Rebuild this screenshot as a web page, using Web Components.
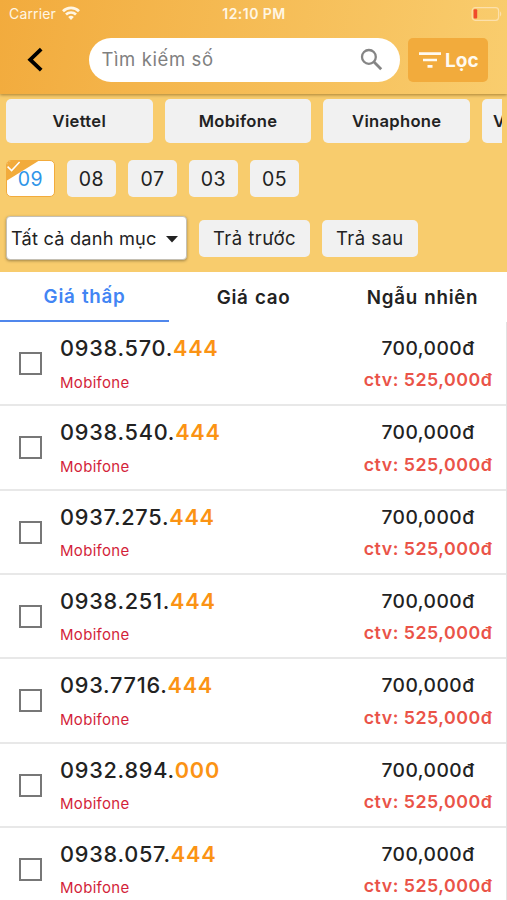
<!DOCTYPE html>
<html lang="vi">
<head>
<meta charset="utf-8">
<title>Sim</title>
<style>
  body {
    margin: 0;
    width: 507px;
    height: 900px;
    overflow: hidden;
    background: #fff;
    color: #222;
    font-family: Inter, "Liberation Sans", sans-serif;
  }
</style>
</head>
<body>
<sim-app></sim-app>

<script>
const define = (name, html, setup) => {
  const template = document.createElement('template')
  template.innerHTML = html

  customElements.define(name, class extends HTMLElement {
    constructor() {
      super()
      this.attachShadow({ mode: 'open' }).appendChild(template.content.cloneNode(true))
    }

    connectedCallback() {
      if (setup) setup(this, this.shadowRoot)
    }
  })
}

define('status-bar', `
  <style>
    :host {
      display: grid;
      grid-template-columns: 1fr auto 1fr;
      align-items: center;
      height: 28px;
      padding: 0 8px 0 9px;
      color: #fff6e4;
      font-size: 14px;
      line-height: 28px;
    }
    .left { display: flex; align-items: center; gap: 6px; letter-spacing: .15px; }
    .time { font-size: 14px; font-weight: 600; letter-spacing: .45px; }
    .battery { justify-self: end; margin-right: -8px; }
    svg { display: block; }
    .left svg { margin-top: -2px; }
  </style>
  <span class="left">Carrier
    <svg width="18" height="14" viewBox="0 0 18 14" fill="none" stroke="#fff6e4" stroke-width="2.7">
      <path d="M1 5.2a11.4 11.4 0 0 1 16 0M4 8.5a7.2 7.2 0 0 1 10 0"/>
      <path d="M9 14 6.2 11.1a4 4 0 0 1 5.6 0z" fill="#fff6e4" stroke="none"/>
    </svg>
  </span>
  <span class="time">12:10 PM</span>
  <svg class="battery" width="36" height="14" viewBox="0 0 36 14">
    <rect x="1.2" y=".7" width="26.4" height="12.6" rx="3" fill="none" stroke="#fce0ab" stroke-width="1.2"/>
    <rect x="2.6" y="2.2" width="3.6" height="9.4" rx="1" fill="#f04a2c"/>
    <path d="M29 4.6c1.6.5 1.6 4.3 0 4.8z" fill="#fce0ab"/>
  </svg>
`)

define('search-header', `
  <style>
    :host {
      display: flex;
      align-items: center;
      height: 44px;
      padding: 10px 19px 12px 26px;
    }
    .back { width: 18px; height: 28px; margin-right: 45px; }
    .field {
      display: flex;
      align-items: center;
      box-sizing: border-box;
      width: 311px;
      height: 44px;
      padding: 0 17px 2px 12.5px;
      border-radius: 22px;
      background: #fff;
      color: #808080;
      font-size: 18.5px;
      letter-spacing: .6px;
    }
    .field span { flex: 1; }
    .filter {
      display: flex;
      align-items: center;
      box-sizing: border-box;
      width: 80px;
      height: 44px;
      margin-left: 8px;
      padding-left: 11px;
      gap: 4px;
      border-radius: 5px;
      background: #f2ab3c;
      color: #fffaf0;
      font-size: 19px;
      font-weight: 700;
    }
  </style>
  <svg class="back" viewBox="0 0 18 28" fill="none" stroke="#000" stroke-width="3.8">
    <path d="M15.2 3.2 4.2 13.7l11 10.5"/>
  </svg>
  <div class="field">
    <span><slot></slot></span>
    <svg width="23" height="23" viewBox="0 0 23 23" fill="none" stroke="#858585" stroke-width="2.3">
      <circle cx="8.9" cy="8.9" r="6.9"/>
      <path d="m13.8 13.8 7.4 7.4" stroke-width="2.8"/>
    </svg>
  </div>
  <div class="filter">
    <svg width="22" height="16" viewBox="0 0 22 16" fill="none" stroke="#fffaf0" stroke-width="2.6">
      <path d="M0 1.6h22M4 8h14M8.5 14.4h5"/>
    </svg>
    <slot name="action"></slot>
  </div>
`)

define('carrier-chip', `
  <style>
    :host {
      flex: none;
      box-sizing: border-box;
      width: 146.7px;
      height: 44px;
      border-radius: 5px;
      background: #f1f1f1;
      font-size: 16.6px;
      font-weight: 600;
      letter-spacing: .3px;
      line-height: 44px;
      text-align: center;
    }
  </style>
  <slot></slot>
`)

define('option-chip', `
  <style>
    :host {
      flex: none;
      position: relative;
      box-sizing: border-box;
      height: 37px;
      padding: 0 14px;
      overflow: hidden;
      border-radius: 5px;
      background: #f1f1f1;
      font-size: 18.5px;
      letter-spacing: .5px;
      line-height: 37px;
      text-align: center;
      white-space: nowrap;
    }
    :host([prefix]) { width: 49px; padding: 0; font-size: 19.5px; line-height: 38px; }
    :host(:not([prefix])) { letter-spacing: .45px; }
    :host([selected]) {
      background: #fff;
      border: 1px solid #f2ab3c;
      color: #2f95e8;
      line-height: 36px;
    }
    svg { display: none; position: absolute; left: -1px; top: -1px; }
    :host([selected]) svg { display: block; }
    span { position: relative; }
  </style>
  <svg width="34" height="21" viewBox="0 0 34 21">
    <path d="M0 0h34L0 21z" fill="#f2ab3c"/>
    <path d="m1.6 6.6 4 4L13.6 2" fill="none" stroke="#fff" stroke-width="1.5"/>
  </svg>
  <span><slot></slot></span>
`)

define('category-select', `
  <style>
    :host {
      flex: none;
      display: flex;
      align-items: center;
      justify-content: space-between;
      box-sizing: border-box;
      width: 181px;
      height: 44px;
      padding: 0 8px 0 4px;
      border: 1px solid #c5c0b4;
      border-radius: 4px;
      background: #fff;
      box-shadow: 0 1px 3px rgba(0, 0, 0, .35);
      font-size: 18.2px;
      letter-spacing: .2px;
      white-space: nowrap;
    }
    svg { margin-top: 2px; }
  </style>
  <slot></slot>
  <svg width="12" height="7" viewBox="0 0 12 7"><path d="M0 0h12L6 6.6z" fill="#222"/></svg>
`)

define('chip-row', `
  <style>
    :host {
      display: flex;
      align-items: center;
      gap: 12px;
      padding-left: 6px;
      overflow: hidden;
    }
  </style>
  <slot></slot>
`)

define('price-tabs', `
  <style>
    :host {
      display: grid;
      grid-template-columns: repeat(3, 1fr);
      height: 50px;
      background: #fff;
      font-size: 18.8px;
      font-weight: 600;
      letter-spacing: .7px;
      word-spacing: 1px;
      line-height: 51px;
      text-align: center;
    }
    ::slotted(*) { box-sizing: border-box; height: 50px; }
    ::slotted([selected]) {
      border-bottom: 2px solid #5087ec;
      color: #4285f4;
      line-height: 49px;
    }
  </style>
  <slot></slot>
`)

define('number-row', `
  <style>
    :host {
      display: flex;
      box-sizing: border-box;
      height: 84.3px;
      padding-left: 19px;
      border-bottom: 2px solid #e8e8e8;
    }
    .box {
      box-sizing: border-box;
      width: 23px;
      height: 23px;
      margin: 30px 18px 0 0;
      border: 2px solid #777;
    }
    .left { flex: 1; padding-top: 11px; }
    .number {
      font-size: 21.7px;
      font-weight: 500;
      letter-spacing: .75px;
      line-height: 30px;
    }
    .number b { color: #fb9314; font-weight: 600; }
    .carrier { margin-top: 4.4px; color: #d31f3a; font-size: 15px; letter-spacing: .3px; line-height: 30px; }
    .prices { width: 156px; padding-top: 11px; text-align: center; letter-spacing: .5px; }
    .price { font-size: 19.2px; font-weight: 500; line-height: 30px; }
    .agent { margin-top: 2.3px; color: #ea5348; font-size: 17.8px; font-weight: 600; line-height: 30px; }
  </style>
  <div class="box"></div>
  <div class="left">
    <div class="number"><span></span><b></b></div>
    <div class="carrier"><slot></slot></div>
  </div>
  <div class="prices">
    <div class="price">700,000đ</div>
    <div class="agent">ctv: 525,000đ</div>
  </div>
`, (host, root) => {
  const number = host.getAttribute('number')
  root.querySelector('.number span').textContent = number.slice(0, -3)
  root.querySelector('.number b').textContent = number.slice(-3)
})

define('sim-app', `
  <style>
    :host { display: block; }
    .top {
      position: relative;
      height: 94px;
      background: linear-gradient(100deg, #f2ab3d, #f9cd6e);
      box-shadow: 0 1px 3px rgba(90, 60, 0, .5);
    }
    .filters { height: 178px; background: #f8cc6d; }
    .filters > :nth-child(1) { padding-top: 5px; margin-right: 5px; }
    .filters > :nth-child(2) { padding-top: 17px; }
    .filters > :nth-child(3) { padding-top: 19px; padding-bottom: 12px; }
    .list { padding-top: .2px; border-right: 1px solid #e2e2e2; }
    .cut { width: 20px; border-radius: 5px 0 0 5px; text-align: left; text-indent: 11px; overflow: hidden; }
  </style>
  <div class="top">
    <status-bar></status-bar>
    <search-header>Tìm kiếm số<span slot="action">Lọc</span></search-header>
  </div>
  <div class="filters">
    <chip-row>
      <carrier-chip>Viettel</carrier-chip>
      <carrier-chip>Mobifone</carrier-chip>
      <carrier-chip>Vinaphone</carrier-chip>
      <carrier-chip class="cut">V</carrier-chip>
    </chip-row>
    <chip-row>
      <option-chip prefix selected>09</option-chip>
      <option-chip prefix>08</option-chip>
      <option-chip prefix>07</option-chip>
      <option-chip prefix>03</option-chip>
      <option-chip prefix>05</option-chip>
    </chip-row>
    <chip-row>
      <category-select>Tất cả danh mục</category-select>
      <option-chip>Trả trước</option-chip>
      <option-chip>Trả sau</option-chip>
    </chip-row>
  </div>
  <price-tabs>
    <span selected>Giá thấp</span>
    <span>Giá cao</span>
    <span>Ngẫu nhiên</span>
  </price-tabs>
  <div class="list">
    <number-row number="0938.570.444">Mobifone</number-row>
    <number-row number="0938.540.444">Mobifone</number-row>
    <number-row number="0937.275.444">Mobifone</number-row>
    <number-row number="0938.251.444">Mobifone</number-row>
    <number-row number="093.7716.444">Mobifone</number-row>
    <number-row number="0932.894.000">Mobifone</number-row>
    <number-row number="0938.057.444">Mobifone</number-row>
  </div>
`)
</script>
</body>
</html>
